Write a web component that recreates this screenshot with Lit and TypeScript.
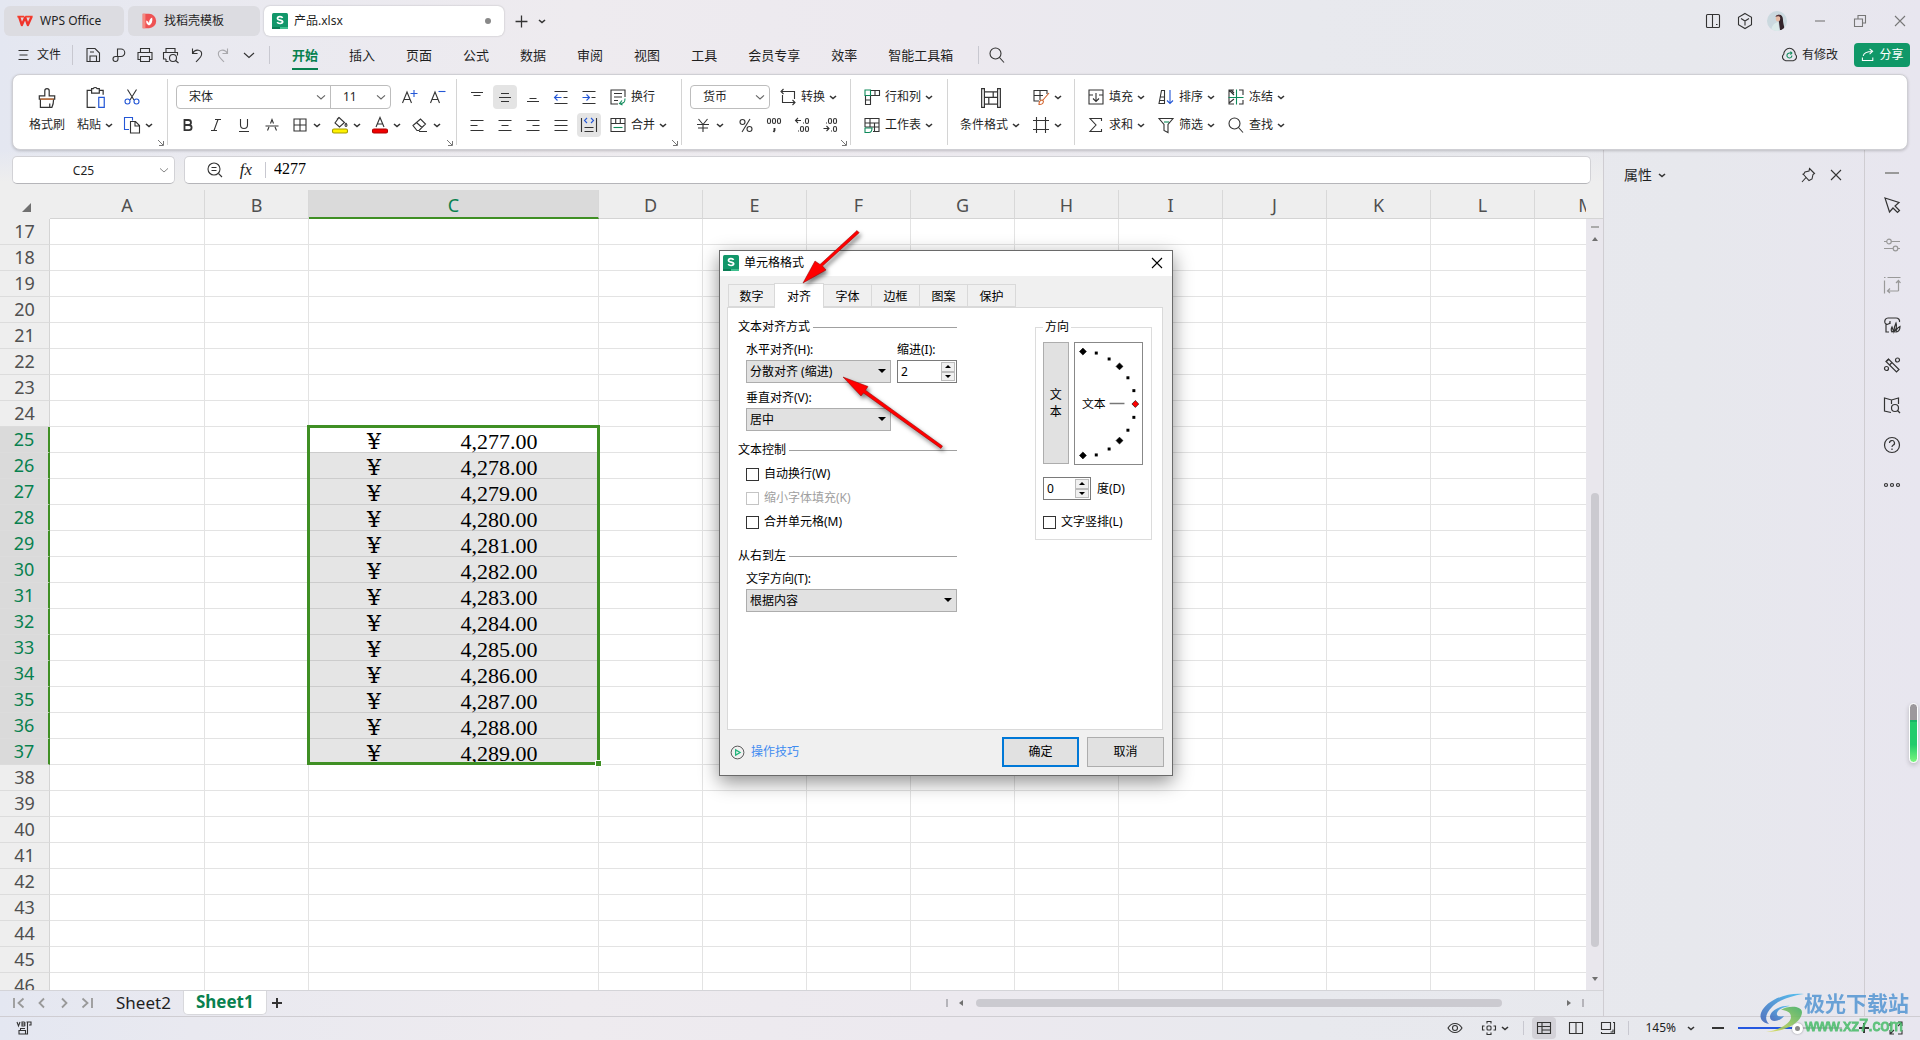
import { LitElement, html, svg, css, nothing, TemplateResult, SVGTemplateResult } from "lit";
import { customElement, property, state } from "lit/decorators.js";
import { classMap } from "lit/directives/class-map.js";

/* Every glyph is drawn on a 20 x 20 grid; stroke colour is inherited. */
const BLUE = "#2457d6";
const GREEN = "#0e8a5a";
const glyphs: Record<string, SVGTemplateResult> = {
  wps: svg`<path d="M1.500 5.200H9M10.500 5.200h8" stroke="#f5402c" stroke-width="2"/><path d="M3.500 5.500l3 9 3.700-8.500 3 8.500 4-9" stroke="#f0342c" stroke-width="2.600" stroke-linejoin="round"/>`,
  docer: svg`<path d="M3 2h7a8 8 0 0 1 0 16H3z" fill="#ee5253" stroke="none"/><path d="M3 2h3v16H3z" fill="#f58a80" stroke="none"/><path d="M10 15c-2.500-1-3.500-3-3-5.500 1.500.5 2.500 1.500 3 3 0-3 .8-5 3.500-6.500.8 4-.3 7.500-3.500 9z" fill="#fff" stroke="none"/>`,
  menu: svg`<path d="M4.500 5.500h10M5.500 10h8M4.500 14.500h10"/>`,
  save: svg`<path d="M4 3.500h8l4.500 4.500v8.500H4zM7 16.500v-5.500h6.500v5.500M7 7h4"/>`,
  output: svg`<path d="M8.500 11.500V4H12a3.700 3.700 0 0 1 0 7.500H6.500a2.500 2.500 0 1 0 2.500 2.500v-2.500"/>`,
  print: svg`<path d="M5.500 7.500v-4h9v4M5.500 14.500H3v-7h14v7h-2.500M5.500 11.500h9v5h-9z"/>`,
  preview: svg`<path d="M5 7.500v-4h9v4M5 14H2.500V7.500h14v3M5 14v2.500h2.500"/><circle cx="12" cy="13" r="3.500"/><path d="M14.500 15.500 17.500 18"/>`,
  undo: svg`<path d="M5.500 3.500v5h5M5.500 8.500c3-5.500 10-3.500 9 1.500-.4 2.500-3 4-5.500 7"/>`,
  redo: svg`<path d="M14.500 3.500v5h-5M14.500 8.500c-3-5.500-10-3.500-9 1.500.4 2.500 3 4 5.500 7"/>`,
  down: svg`<path d="M5 8l5 4.500L15 8"/>`,
  plus: svg`<path d="M10 3v14M3 10h14" stroke-width="1.500"/>`,
  plusBold: svg`<path d="M10 5v10M5 10h10" stroke-width="2"/>`,
  minusBold: svg`<path d="M4 10h12" stroke-width="2"/>`,
  search: svg`<circle cx="8.500" cy="8.500" r="5.500"/><path d="M12.500 12.500 17 17.500"/>`,
  layout: svg`<rect x="3.500" y="3.500" width="13" height="13" rx="1"/><path d="M9.500 3.500v13M13 13.500h1.500"/>`,
  cube: svg`<path d="M10 2.500l6.500 3.700v7.600L10 17.500l-6.500-3.700V6.200zM6 7.500l4 2.500 4-2.500M10 10v4.500"/>`,
  minimize: svg`<path d="M5 10h10" stroke="#777"/>`,
  restore: svg`<path d="M4.500 8h8v7.500h-8zM8 8V4.500h7.500V12h-3" stroke="#777"/>`,
  closeWin: svg`<path d="M5 5l10 10M15 5 5 15" stroke="#777"/>`,
  close: svg`<path d="M5 5l10 10M15 5 5 15"/>`,
  cloud: svg`<path d="M6 16h8a4 4 0 0 0 2-7 6 6 0 0 0-12 0 4 4 0 0 0 2 7z"/><path d="M12.500 10.500a2.600 2.600 0 1 1-2-2.500h1.500M11 6.500 12.500 8 11 9.500" stroke="${GREEN}"/>`,
  share: svg`<path d="M3 13v4h13v-4M4 11c.8-4 4-5.500 11.500-5.500M12 2.500l3.800 3L12 9"/>`,
  brush: svg`<path d="M8 8V3.500a2 2 0 0 1 4 0V8h5v3H3V8zM4 11v7.500h10.500c1-2 1.500-4 1.500-7.500M12.500 15v3.500"/><path d="M4 11h12" stroke="#e07b39"/>`,
  paste: svg`<path d="M5.500 3H2v15.500h7.500M13 3h3.500v4M6 1.500h1.500a2 2 0 0 1 3.500 0H13v4H6z"/><path d="M12.500 9.500h5v9h-5z" stroke="${BLUE}"/>`,
  cut: svg`<path d="M5.500 2.500 12 13M14.500 2.500 8 13"/><g stroke="${BLUE}"><circle cx="5.500" cy="14.500" r="2.500"/><circle cx="14.500" cy="14.500" r="2.500"/></g>`,
  copy: svg`<path d="M7 14.500H2.500v-12h8v3" stroke="${BLUE}"/><path d="M8.500 6.500h5l4 4V18h-9zM13 6.500V11h4.500"/>`,
  bold: svg`<path d="M6.500 5h4a2.400 2.400 0 0 1 0 5h-4zM6.500 10H11a2.600 2.600 0 0 1 0 5.200H6.500z" stroke-width="1.800"/>`,
  italic: svg`<path d="M9 4.500h6M5 15.500h6M12 4.500 8 15.500"/>`,
  underline: svg`<path d="M6.500 4v6a3.500 3.500 0 0 0 7 0V4M5 16.500h10"/>`,
  strike: svg`<path d="M5.500 15.500 7 12M8.500 8.500 10 4.500l1.500 4M13 12l1.500 3.500M3.500 11h13"/>`,
  borders: svg`<path d="M4 4h12v12H4zM10 4v12M4 10h12"/>`,
  fill: svg`<path d="M9 2.500l5.500 5-5 4.500L5 8zM7 4.500 9 2.500M16 8c1.500 2 1 3.500 0 3.500s-1.500-1.500 0-3.500"/><rect x="2.500" y="14" width="15" height="4" rx="1.500" fill="#fff200" stroke="#a59c00"/>`,
  fontcolor: svg`<path d="M6 12 10 2.500 14 12M7.500 9h5"/><rect x="2.500" y="14" width="15" height="4" rx="1.500" fill="#f00000" stroke="#b00000"/>`,
  eraser: svg`<path d="M3 10.500 10.500 4l5 5L9 15.500H7zM6.500 7.500l5.500 5M9 16.500h8"/>`,
  fontUp: svg`<path d="M3.500 16 8 5l4.500 11M5 12.500h6"/><path d="M15 3v7M11.500 6.500h7" stroke="${BLUE}"/>`,
  fontDown: svg`<path d="M3.500 16 8 5l4.500 11M5 12.500h6"/><path d="M11.500 4.500h7" stroke="${BLUE}"/>`,
  alignTop: svg`<path d="M4 5.500h12M6.500 8.500h7"/>`,
  alignMid: svg`<path d="M6 6.500h8M4 10.500h12M6 14.500h8"/>`,
  alignBottom: svg`<path d="M6.500 11.500h7M4 14.500h12"/>`,
  outdent: svg`<path d="M3.500 4.500h13M12.500 10.500h4M3.500 16.500h13"/><path d="M10.500 10.500H3.500M6.500 7.500l-3 3 3 3" stroke="${BLUE}"/>`,
  indent: svg`<path d="M3.500 4.500h13M12.500 10.500h4M3.500 16.500h13"/><path d="M3.500 10.500h7M7.500 7.500l3 3-3 3" stroke="${BLUE}"/>`,
  left: svg`<path d="M3.500 5.500h13M3.500 10.500h7M3.500 15.500h13"/>`,
  center: svg`<path d="M3.500 5.500h13M6.500 10.500h7M3.500 15.500h13"/>`,
  right: svg`<path d="M3.500 5.500h13M9.500 10.500h7M3.500 15.500h13"/>`,
  justify: svg`<path d="M3.500 5.500h13M3.500 10.500h13M3.500 15.500h13"/>`,
  distribute: svg`<path d="M2.500 3v14M17.500 3v14M5.500 12.500h9M5.500 16.500h9"/><path d="M8 3 5.500 5.500 8 8M12 3l2.500 2.500L12 8" stroke="${BLUE}"/>`,
  wrap: svg`<path d="M10 17H3V3h14v7M6 6.500h8M6 10h8M6 13.500h4"/><path d="M17 11.500c0 3-.5 5-4.500 5M14 13.500l-2.500 3 3 1.500" stroke="${GREEN}"/>`,
  merge: svg`<path d="M3 3.500h14v13H3zM3 8.500h14M7.700 3.500v5M12.300 3.500v5"/><path d="M5.500 12.500h9" stroke="${GREEN}"/>`,
  convert: svg`<path d="M4 4.500h12.500V12M4.500 8v7.500h12M5.500 2 3 4.500 5.500 7M14.500 13l2.500 2.500-2.500 2.500"/>`,
  yuan: svg`<path d="M5.500 4 10 9.500 14.500 4M10 9.500V17M4 9.500h12M5 13h10"/>`,
  percent: svg`<circle cx="6.500" cy="7" r="2.500"/><circle cx="13.500" cy="14" r="2.500"/><path d="M14 4 6 17"/>`,
  thousand: svg`<rect x="3.500" y="3.500" width="3" height="5" rx="1.500"/><rect x="8.500" y="3.500" width="3" height="5" rx="1.500"/><rect x="13.500" y="3.500" width="3" height="5" rx="1.500"/><path d="M10.500 13v2.500l-1 1.500" stroke-width="1.800"/>`,
  decMore: svg`<path d="M9 5.500H3.500M6 3 3.500 5.500 6 8M11 8h1M6 16h1"/><rect x="13.500" y="3.500" width="3" height="5" rx="1.500"/><rect x="8.500" y="11.500" width="3" height="5" rx="1.500"/><rect x="13.500" y="11.500" width="3" height="5" rx="1.500"/>`,
  decLess: svg`<path d="M3.500 13.500H9M6.500 11 9 13.500 6.500 16M11 16h1M6 8h1"/><rect x="8.500" y="3.500" width="3" height="5" rx="1.500"/><rect x="13.500" y="3.500" width="3" height="5" rx="1.500"/><rect x="13.500" y="11.500" width="3" height="5" rx="1.500"/>`,
  rowcol: svg`<path d="M8.500 3.500h9v5h-9M13 3.500v5M3.500 8.500v9h5v-9M3.500 13h5"/><path d="M3 3h5.500v5.500H3z" stroke="${GREEN}"/>`,
  sheet: svg`<path d="M11 16.500h6V3.500H3V12M3 8h14M8 3.500V12M3 12h14M12.500 8v8.500"/><path d="M3 13h7c0 2.500-1 4.500-3 4.500H3z" stroke="${GREEN}" fill="#fff"/>`,
  condition: svg`<path d="M4 1.500H1.500v17H4M16 1.500h2.500v17H16M4 1v18M16 1v18M4 4.500h12M4 9.500h12M4 15.500h12M12 4.500v5M8 9.500v6"/>`,
  tablestyle: svg`<path d="M8 14H3V3.500h13V7M3 8.500h9M9 3.500V13"/><path d="M18 6l-6 7M8 17.500c0-3 1-4.500 3.500-4.500 2 1.500.5 5-3.500 4.500z" stroke="#d2622a"/>`,
  cells: svg`<path d="M5.500 2v16M14.500 2v16M2 5.500h16M2 14.500h16"/>`,
  fillDown: svg`<path d="M3 8V3h14v5M3 8h4M13 8h4M3 8v9h14V8M10 6v8M7 11.500 10 14.500l3-3"/>`,
  sort: svg`<path d="M3 16.500 5.500 3.500H8.500v13zM4.500 10h4M3.500 13.500h5"/><path d="M14 3v13.500M11 13.500l3 3 3-3" stroke="${BLUE}"/>`,
  freeze: svg`<path d="M8 3H3v14h5M13 17h4v-4M17 8V3h-4M3 3l5 5M5 3l3 3M8 12l-5 4"/><path d="M10.500 2.500v15M2.500 10.500h15" stroke="${GREEN}"/>`,
  sum: svg`<path d="M15.500 6V3.500H4l6 6.500-6 6.500h11.500V14"/>`,
  filter: svg`<path d="M3 3.500h14l-5 6v8l-4-2v-6z"/><path d="M8 7h5" stroke="${GREEN}"/>`,
  zoomFx: svg`<circle cx="9" cy="9" r="6"/><path d="M13.500 13.500 17 17M6.500 7.500h5M6.500 10.500h5"/>`,
  pin: svg`<path d="M11.500 3.500l5 5-1.500 1-1 4.500-3 1.500L5.500 9.500 7 7l4-1zM8 12.500 4 17M5.500 9.500 4.500 9"/>`,
  dash: svg`<path d="M3 10h14" stroke="#999" stroke-width="2"/>`,
  pointer: svg`<path d="M3 3l14 4.500-4 3.500 4.500 4.500-2 2L11 13l-3.500 4z"/>`,
  sliders: svg`<g stroke="#999"><path d="M2 6.500h3M9 6.500h9M2 13.500h9M15.500 13.500H18"/><circle cx="7" cy="6.500" r="2.300"/><circle cx="13.500" cy="13.500" r="2.300"/></g>`,
  resize: svg`<g stroke="#999"><path d="M5.500 2.500h13M2.500 5.500v13M2 2.500h1.500M16.500 16V6M14 8l2.500-2.500L18.500 8M16.500 16H6M8 13.500 5.500 16 8 18"/></g>`,
  artist: svg`<path d="M4 9v8h3M3 8c-1-3 1-5 3-5h8c2.500 0 4 2 3.500 4M8 9V6M3 8c1.500 2 4 1.500 5-.5M10 17c-1.500-2-.5-4 0-5l1.500 4zM12 16c0-4 1-6 2-8 1 3 .5 6-2 9zM14 17c0-3 2-4.500 4-5.500 0 3-1 5-4 5.500z"/>`,
  tools: svg`<path d="M4 6.500 6.500 4l10.500 10.500-2.500 2.500zM8 9.500l2-2"/><circle cx="15.500" cy="5" r="2"/><circle cx="4.500" cy="13.500" r="2"/><path d="M7 4 5 6"/>`,
  book: svg`<path d="M9 17.500 2.500 16V3l7 2 7-2v6M9.500 5v4"/><circle cx="13" cy="13" r="3.500"/><path d="M15.500 15.500 18 18"/>`,
  help: svg`<circle cx="10" cy="10" r="7.500"/><path d="M7.500 8a2.500 2.500 0 1 1 3.500 2.300c-.8.400-1 .9-1 1.700M10 13.500V15"/>`,
  more: svg`<circle cx="4" cy="10" r="1.500"/><circle cx="10" cy="10" r="1.500"/><circle cx="16" cy="10" r="1.500"/>`,
  first: svg`<path d="M4 5v10M13.500 5.500 8.500 10l5 4.500"/>`,
  prev: svg`<path d="M12 5.500 7.500 10l4.500 4.500"/>`,
  next: svg`<path d="M8 5.500 12.500 10 8 14.500"/>`,
  last: svg`<path d="M16 5v10M6.500 5.500l5 4.500-5 4.500"/>`,
  macro: svg`<path d="M3 4l1.500 4L6 4M8 4h2a1 1 0 0 1 0 2H8zM8 6h2a1 1 0 0 1 0 2H8zM12.500 4h4.500v3h-2M13.500 4v12H5v-3.500h6.500V16M6.500 12.500v-2H11"/>`,
  eye: svg`<path d="M3 10c3.500-6 10.500-6 14 0-3.500 6-10.500 6-14 0z"/><circle cx="10" cy="10" r="2.500"/>`,
  cross: svg`<rect x="8" y="8" width="4" height="4" rx="1"/><path d="M8 5.500v-2h4v2M8 14.500v2h4v-2M5.500 8h-2v4h2M14.500 8h2v4h-2"/>`,
  viewNormal: svg`<path d="M3.500 4.500h13v11h-13zM3.500 8.500h13M8 4.500v11M8 12h8.500"/>`,
  viewBook: svg`<path d="M3.500 4.500h13v11h-13zM10 4.500v11"/>`,
  viewPage: svg`<path d="M3.500 4.500h9v7h-9zM15 4.500h1.500v11h-13V14M12.500 14H15v-2.500"/>`,
  full: svg`<path d="M4 8V5M4 12v4h4M12 16h4v-4M16 8V4h-4M16 4l-4 4M4 16l4-4"/>`,
  tips: svg`<circle cx="10" cy="10" r="8.500"/><path d="M7.500 6.500 13.500 10l-6 3.500z" stroke="#1fb47a" stroke-width="1.600"/>`,
};

const icon = (name: string, cls = ""): TemplateResult => html`<svg
  class="icon ${cls}" viewBox="0 0 20 20" width="20" height="20" aria-hidden="true">${glyphs[name]}</svg>`;

const chevron = html`<svg class="chev" viewBox="0 0 10 10" width="10" height="10" aria-hidden="true">
  <path d="M2 4l3 2.500L8 4"/></svg>`;

const sLogo = html`<svg class="slogo" viewBox="0 0 16 16" width="16" height="16" aria-hidden="true">
  <rect width="16" height="16" rx="1.500" fill="#12976a"/><path d="M8 14h8v2H8z" fill="#3fc08f"/><path d="M0 14h8v2H0z" fill="#0b7d55"/>
  <path d="M10.500 5c-.6-1.800-5-1.800-5 .4 0 2.300 5.200 1.100 5.200 3.400 0 2.200-4.800 2.200-5.400.2" fill="none" stroke="#fff" stroke-width="1.700"/></svg>`;

const shared = css`
  :host { box-sizing: border-box; }
  *, *::before, *::after { box-sizing: border-box; }
  button, select, input {
    font: inherit; color: inherit; background: none; border: 0; margin: 0; padding: 0;
  }
  button { display: inline-flex; align-items: center; justify-content: center; }
  .icon, .chev { display: block; flex: none; fill: none; stroke: #333; stroke-width: 1.1; }
  .chev { stroke: #333; stroke-width: 1.6; }
  .slogo { display: block; flex: none; }
`;

/* ---------- Ribbon ---------- */
@customElement("wps-ribbon")
class WpsRibbon extends LitElement {
  static styles = [shared, css`
    :host {
      display: flex; height: 76px; margin: 0 12px; background: #fff; border-radius: 8px;
      border: 1px solid #cfcfd4; box-shadow: 0 1px 3px #00000030; font-size: 12px; line-height: 16px;
      position: relative; z-index: 1;
    }
    .group { display: flex; position: relative; padding-right: 6px; }
    .group::after { content: ""; position: absolute; right: 0; top: 4px; bottom: 4px; width: 1px; background: #d4d4d4; }
    .group.last::after { display: none; }
    .corner { position: absolute; right: 3px; bottom: 2px; fill: none; stroke: #777; }
    .rows { display: flex; flex-direction: column; gap: 4px; padding-top: 10px; }
    .row { display: flex; align-items: center; height: 24px; gap: 8px; }
    .tight { gap: 4px; }
    .tool { height: 24px; gap: 3px; white-space: nowrap; }
    .split { gap: 2px; }
    .sq { width: 24px; border-radius: 4px; }
    .on { background: #e4e4e4; }
    .big { flex-direction: column; height: 56px; margin-top: 7px; gap: 4px; }
    .big .cap { display: flex; align-items: center; gap: 3px; height: 20px; }
    .big .icon { width: 22px; height: 26px; }
    .g1 { width: 155px; padding-left: 16px; }
    .g1 .paste { margin-left: 12px; margin-right: 8px; }
    .g2 { width: 289px; padding-left: 8px; }
    .g3 { width: 225px; padding-left: 8px; }
    .g3 .wide { margin-left: 3px; }
    .g4 { width: 169px; padding-left: 8px; }
    .g4 .pad { padding-left: 3px; }
    .g4 .yuan { margin-right: 3px; }
    .g5 { width: 97px; padding-left: 11px; }
    .g6 { width: 127px; padding-left: 12px; gap: 10px; }
    .g7 { padding-left: 11px; }
    .g7 .row { gap: 10px; }
    .fontline { padding-left: 2px; }
    .boxes { display: flex; border: 1px solid #bdbdbd; border-radius: 4px; height: 24px; }
    .pick { position: relative; display: flex; align-items: center; }
    .pick select { appearance: none; width: 100%; height: 22px; padding: 0 24px 0 12px; }
    .pick .icon { position: absolute; right: 1px; width: 16px; height: 16px; pointer-events: none; stroke: #666; stroke-width: 1.4; }
    .face { width: 153px; }
    .size { width: 60px; border-left: 1px solid #bdbdbd; }
    .kind { width: 78px; }
  `];

  private tool(name: string, label: string, text = "", drop = false, cls = "") {
    return html`<button class="tool ${text ? "" : "split"} ${cls}" aria-label=${label} title=${label}>
      ${icon(name)}${text ? html`<span>${text}</span>` : nothing}${drop ? chevron : nothing}</button>`;
  }
  private corner = html`<svg class="corner" viewBox="0 0 8 8" width="8" height="8" aria-hidden="true"><path d="M1 1l5 5M6.500 2v4.500H2"/></svg>`;
  private list(cls: string, label: string, options: string[]) {
    return html`<span class="pick ${cls}"><select aria-label=${label}>${options.map((o) => html`<option>${o}</option>`)}</select>${icon("down")}</span>`;
  }

  render() {
    return html`
      <div class="group g1">
        <button class="big">${icon("brush")}<span class="cap">格式刷</span></button>
        <button class="big paste">${icon("paste")}<span class="cap">粘贴${chevron}</span></button>
        <div class="rows">
          <div class="row">${this.tool("cut", "剪切")}</div>
          <div class="row">${this.tool("copy", "复制", "", true)}</div>
        </div>${this.corner}
      </div>
      <div class="group g2">
        <div class="rows">
          <div class="row">
            <div class="boxes">${this.list("face", "字体", ["宋体"])}${this.list("size", "字号", ["11"])}</div>
            ${this.tool("fontUp", "增大字号")}${this.tool("fontDown", "减小字号")}
          </div>
          <div class="row fontline">
            ${this.tool("bold", "加粗")}${this.tool("italic", "倾斜")}${this.tool("underline", "下划线")}${this.tool("strike", "删除线")}
            ${this.tool("borders", "边框", "", true)}${this.tool("fill", "填充颜色", "", true)}
            ${this.tool("fontcolor", "字体颜色", "", true)}${this.tool("eraser", "清除", "", true)}
          </div>
        </div>${this.corner}
      </div>
      <div class="group g3">
        <div class="rows">
          <div class="row tight">
            ${this.tool("alignTop", "顶端对齐", "", false, "sq")}${this.tool("alignMid", "垂直居中", "", false, "sq on")}
            ${this.tool("alignBottom", "底端对齐", "", false, "sq")}${this.tool("outdent", "减少缩进", "", false, "sq")}
            ${this.tool("indent", "增加缩进", "", false, "sq")}${this.tool("wrap", "换行", "换行", false, "wide")}
          </div>
          <div class="row tight">
            ${this.tool("left", "左对齐", "", false, "sq")}${this.tool("center", "居中", "", false, "sq")}
            ${this.tool("right", "右对齐", "", false, "sq")}${this.tool("justify", "两端对齐", "", false, "sq")}
            ${this.tool("distribute", "分散对齐", "", false, "sq on")}${this.tool("merge", "合并", "合并", true, "wide")}
          </div>
        </div>${this.corner}
      </div>
      <div class="group g4">
        <div class="rows">
          <div class="row"><div class="boxes">${this.list("kind", "数字格式", ["货币"])}</div>${this.tool("convert", "转换", "转换", true)}</div>
          <div class="row pad">
            ${this.tool("yuan", "会计格式", "", true, "yuan")}${this.tool("percent", "百分比")}${this.tool("thousand", "千位分隔")}
            ${this.tool("decMore", "增加小数位")}${this.tool("decLess", "减少小数位")}
          </div>
        </div>${this.corner}
      </div>
      <div class="group g5">
        <div class="rows">
          <div class="row">${this.tool("rowcol", "行和列", "行和列", true)}</div>
          <div class="row">${this.tool("sheet", "工作表", "工作表", true)}</div>
        </div>
      </div>
      <div class="group g6">
        <button class="big">${icon("condition")}<span class="cap">条件格式${chevron}</span></button>
        <div class="rows">
          <div class="row">${this.tool("tablestyle", "表格样式", "", true)}</div>
          <div class="row">${this.tool("cells", "单元格样式", "", true)}</div>
        </div>
      </div>
      <div class="group g7 last">
        <div class="rows">
          <div class="row">${this.tool("fillDown", "填充", "填充", true)}${this.tool("sort", "排序", "排序", true)}${this.tool("freeze", "冻结", "冻结", true)}</div>
          <div class="row">${this.tool("sum", "求和", "求和", true)}${this.tool("filter", "筛选", "筛选", true)}${this.tool("search", "查找", "查找", true)}</div>
        </div>
      </div>`;
  }
}

/* ---------- Cell grid ---------- */
@customElement("wps-grid")
class WpsGrid extends LitElement {
  @property({ type: Number }) firstRow = 17;
  @property({ type: Number }) lastRow = 46;
  private columns = "ABCDEFGHIJKLM".split("");
  private values = new Map(Array.from({ length: 13 }, (_, i) => [25 + i, `4,${277 + i}.00`] as [number, string]));

  static styles = [shared, css`
    :host { display: block; overflow: hidden; flex: 1; min-width: 0; background: #fff; }
    table { border-collapse: separate; border-spacing: 0; table-layout: fixed; width: 1639px; }
    .wHead { width: 50px; } .wA { width: 155px; } .wC { width: 290px; } .wX { width: 104px; }
    th { font-weight: 400; font-size: 18px; line-height: 22px; color: #505050; background: #eeeeee; padding: 0; }
    thead th { height: 29px; padding-top: 2px; border-right: 1px solid #d8d8d8; border-bottom: 1px solid #d4d4d4; }
    thead .all { border-right-color: transparent; border-bottom-color: transparent; text-align: right; padding-right: 18px; }
    .all svg { display: inline-block; fill: #707070; }
    thead .sel { background: #dadada; color: #08814f; border-bottom: 2px solid #3f8f24; }
    tbody th { height: 26px; padding-bottom: 2px; border-right: 1px solid #d4d4d4; border-bottom: 1px solid #dcdcdc; }
    tbody th.sel { background: #dadada; color: #08814f; border-right: 2px solid #3f8f24; }
    td { height: 26px; padding: 0; border-right: 1px solid #e3e3e3; border-bottom: 1px solid #e3e3e3; }
    .val { background: #e5e5e5; border-bottom-color: #cccccc; position: relative; }
    .val.active { background: #fff; }
    .money {
      display: grid; grid-template-columns: 1fr 88px; padding: 2px 55px 0 58px; height: 25px; line-height: 25px;
      font-family: "Liberation Serif", serif; font-size: 22px; color: #000; text-align: center;
    }
    .sign { font-family: "DejaVu Serif", serif; font-size: 22px; text-align: left; }
    .frame {
      position: absolute; left: -2px; right: -2px; top: -2px; height: calc(100% * 13 + 15px);
      border: 3px solid #3f8f24; pointer-events: none; z-index: 1;
    }
    .frame::after {
      content: ""; position: absolute; right: -5px; bottom: -5px; width: 7px; height: 7px;
      background: #3f8f24; border: 1px solid #fff;
    }
  `];

  render() {
    const rows = Array.from({ length: this.lastRow - this.firstRow + 1 }, (_, i) => this.firstRow + i);
    return html`<table>
      <colgroup><col class="wHead" />${this.columns.map((c) => html`<col class=${c === "A" ? "wA" : c === "C" ? "wC" : "wX"} />`)}</colgroup>
      <thead><tr>
        <th class="all" aria-label="全选"><svg viewBox="0 0 9 9" width="9" height="9"><path d="M9 0v9H0z"/></svg></th>
        ${this.columns.map((c) => html`<th class=${classMap({ sel: c === "C" })}>${c}</th>`)}
      </tr></thead>
      <tbody>${rows.map((r) => html`<tr>
        <th class=${classMap({ sel: this.values.has(r) })}>${r}</th>
        ${this.columns.map((c) => {
          const v = c === "C" ? this.values.get(r) : undefined;
          return v
            ? html`<td class="val ${r === 25 ? "active" : ""}"><div class="money"><span class="sign">¥</span><span>${v}</span></div>${r === 25 ? html`<div class="frame"></div>` : nothing}</td>`
            : html`<td></td>`;
        })}
      </tr>`)}</tbody>
    </table>`;
  }
}

/* ---------- Cell format dialog ---------- */
@customElement("wps-format-dialog")
class WpsFormatDialog extends LitElement {
  @state() private tab = "对齐";
  static styles = [shared, css`
    :host {
      display: flex; flex-direction: column; width: 454px; background: #f0f0f0; border: 1px solid #6a6a6a;
      box-shadow: 0 6px 18px #00000070; font-size: 12px; line-height: 16px; color: #000;
    }
    .head { display: flex; align-items: center; gap: 5px; height: 25px; padding: 0 5px 2px 3px; background: #fff; }
    .head h2 { flex: 1; margin: 0; font-size: 12px; font-weight: 400; }
    .head .icon { stroke: #000; }
    .tabs { display: flex; align-items: flex-end; height: 31px; padding: 0 8px; }
    .tab { width: 48px; height: 23px; padding-top: 2px; border: 1px solid #d9d9d9; border-left: 0; }
    .tab:first-child { border-left: 1px solid #d9d9d9; width: 46px; border-right: 0; }
    .tab.cur { width: 50px; height: 25px; background: #fff; border-left: 1px solid #d9d9d9; border-bottom: 0; margin-bottom: -1px; z-index: 1; }
    .panel { display: flex; align-items: flex-start; justify-content: space-between; height: 423px; margin: 0 9px 0 7px; padding: 11px 10px; background: #fff; border: 1px solid #d9d9d9; }
    .left { display: flex; flex-direction: column; width: 219px; }
    .caption { display: flex; align-items: center; gap: 3px; margin: 0; font-size: 12px; font-weight: 400; }
    .caption::after { content: ""; flex: 1; height: 1px; background: #a0a0a0; }
    .block { display: flex; flex-direction: column; padding: 7px 0 0 8px; gap: 7px; }
    .checks { padding-top: 8px; gap: 8px; }
    .gapS { margin-top: 11px; } .gapL { margin-top: 18px; }
    .pair { display: flex; gap: 6px; }
    .field { display: flex; flex-direction: column; gap: 2px; }
    .combo { position: relative; display: flex; align-self: flex-start; }
    .combo select { appearance: none; width: 145px; height: 23px; padding: 0 20px 0 3px; background: #e1e1e1; border: 1px solid #adadad; }
    .combo.wide select { width: 211px; }
    .combo svg { position: absolute; right: 5px; top: 9px; pointer-events: none; }
    .spin { display: flex; width: 60px; height: 23px; padding: 1px; border: 1px solid #7a7a7a; background: #fff; }
    .spin.small { width: 48px; }
    .spin input { flex: 1; min-width: 0; padding-left: 2px; outline: 0; }
    .steps { display: flex; flex-direction: column; width: 14px; }
    .steps button { flex: 1; background: #f0f0f0; border: 1px solid #bcbcbc; }
    .check { display: flex; align-items: center; gap: 5px; height: 16px; }
    .check input { appearance: none; width: 13px; height: 13px; border: 1px solid #333; background: #fff; }
    .off { color: #a0a0a0; } .off input { border-color: #c4c4c4; }
    fieldset { margin: 0; width: 117px; padding: 7px 8px 9px 7px; border: 1px solid #dcdcdc; min-width: 0; }
    legend { padding: 0 2px; }
    .dialrow { display: flex; align-items: flex-start; gap: 5px; }
    .vert { flex-direction: column; width: 26px; height: 122px; background: #e1e1e1; border: 1px solid #adadad; }
    .vert { line-height: 17px; }
    .dial { display: block; border: 1px solid #888; background: #fff; }
    .dial text { font-size: 12px; fill: #000; }
    .deg { display: flex; align-items: center; gap: 6px; margin: 12px 0 14px; }
    .foot { display: flex; align-items: center; gap: 8px; padding: 7px 8px 8px 10px; }
    .tips { display: flex; align-items: center; gap: 6px; flex: 1; color: #3f8cf0; text-decoration: none; }
    .tips .icon { width: 15px; height: 15px; stroke: #555; stroke-width: 1.3; }
    .act { width: 77px; height: 30px; background: #e1e1e1; border: 1px solid #adadad; }
    .act.ok { border: 2px solid #0078d7; }
  `];

  private caret = html`<svg viewBox="0 0 8 4" width="8" height="4" aria-hidden="true"><path d="M0 0h8L4 4z" fill="#000"/></svg>`;
  private spin(id: string, value: string, small = false) {
    return html`<span class="spin ${small ? "small" : ""}"><input id=${id} type="text" inputmode="numeric" .value=${value} />
      <span class="steps">
        <button aria-label="增加"><svg viewBox="0 0 6 3" width="6" height="3"><path d="M0 3h6L3 0z"/></svg></button>
        <button aria-label="减少"><svg viewBox="0 0 6 3" width="6" height="3"><path d="M0 0h6L3 3z"/></svg></button>
      </span></span>`;
  }
  private combo(id: string, label: string, value: string, wide = false) {
    return html`<div class="field"><label for=${id}>${label}</label>
      <span class="combo ${wide ? "wide" : ""}"><select id=${id}><option>${value}</option></select>${this.caret}</span></div>`;
  }
  private check(label: string, disabled = false) {
    return html`<label class="check ${disabled ? "off" : ""}"><input type="checkbox" ?disabled=${disabled} />${label}</label>`;
  }
  private dots() {
    const big = [[8, 8], [45, 23], [61, 61], [45, 98], [8, 113]];
    const small = [[21, 9], [34, 15], [53, 34], [59, 47], [59, 74], [53, 87], [34, 106], [21, 112]];
    return svg`${big.map(([x, y], i) => svg`<path d="M${x} ${y - 3.5}l3.500 3.500-3.500 3.500-3.500-3.500z" fill=${i === 2 ? "#f00" : "#000"} stroke="#000" stroke-width=".6"/>`)}
      ${small.map(([x, y]) => svg`<rect x=${x - 1} y=${y - 1} width="3" height="3"/>`)}`;
  }

  render() {
    return html`
      <div class="head">${sLogo}<h2>单元格格式</h2><button aria-label="关闭">${icon("close")}</button></div>
      <div class="tabs" role="tablist">${["数字", "对齐", "字体", "边框", "图案", "保护"].map((t) => html`
        <button role="tab" class=${classMap({ tab: true, cur: t === this.tab })} @click=${() => (this.tab = t)}>${t}</button>`)}</div>
      <div class="panel">
        <div class="left">
          <h3 class="caption">文本对齐方式</h3>
          <div class="block">
            <div class="pair">
              ${this.combo("h", "水平对齐(H):", "分散对齐 (缩进)")}
              <div class="field"><label for="ind">缩进(I):</label>${this.spin("ind", "2")}</div>
            </div>
            ${this.combo("v", "垂直对齐(V):", "居中")}
          </div>
          <h3 class="caption gapS">文本控制</h3>
          <div class="block checks">${this.check("自动换行(W)")}${this.check("缩小字体填充(K)", true)}${this.check("合并单元格(M)")}</div>
          <h3 class="caption gapL">从右到左</h3>
          <div class="block">${this.combo("dir", "文字方向(T):", "根据内容", true)}</div>
        </div>
        <fieldset>
          <legend>方向</legend>
          <div class="dialrow">
            <button class="vert"><span>文</span><span>本</span></button>
            <svg class="dial" viewBox="0 0 68 121" width="70" height="123">${this.dots()}
              <text x="7" y="65">文本</text><path d="M35 60.500h15" stroke="#777" stroke-width="1.500"/></svg>
          </div>
          <div class="deg">${this.spin("deg", "0", true)}<label for="deg">度(D)</label></div>
          ${this.check("文字竖排(L)")}
        </fieldset>
      </div>
      <div class="foot">
        <a class="tips" href="#tips">${icon("tips")}操作技巧</a>
        <button class="act ok">确定</button><button class="act">取消</button>
      </div>`;
  }
}

/* ---------- Application shell ---------- */
@customElement("app-root")
class AppRoot extends LitElement {
  static styles = [shared, css`
    :host {
      display: flex; flex-direction: column; height: 100vh; overflow: hidden; position: relative;
      font-family: "Noto Sans", "Noto Sans CJK SC", sans-serif; font-size: 12px; line-height: 16px; color: #1f1f1f;
      background: linear-gradient(90deg, #e4e7f1 0, #e9e9f0 10%, #eeebef 30%, #ece9ef 50%, #e8e9ee 68%, #e7e8ed 88%, #e8e6ef 100%);
    }
    .title { display: flex; align-items: center; gap: 4px; height: 38px; padding: 4px 10px 0 4px; }
    .doc { height: 30px; gap: 6px; padding: 0 12px; border-radius: 6px; background: #dcdce1; justify-content: flex-start; }
    .doc .icon { width: 18px; height: 18px; }
    .home { width: 120px; } .tmpl { width: 132px; }
    .doc.cur { width: 240px; padding: 0 13px 0 8px; background: #fff; box-shadow: 0 0 2px #00000040; }
    .doc .name { flex: 1; text-align: left; }
    .dot { width: 6px; height: 6px; border-radius: 50%; background: #888; }
    .add { gap: 7px; margin-left: 5px; }
    .add .icon { width: 17px; height: 17px; }
    .right { display: flex; align-items: center; margin-left: auto; }
    .win { gap: 12px; }
    .win .end { gap: 20px; margin-left: 11px; display: flex; }
    .win .icon { width: 20px; }
    .menu { display: flex; align-items: center; height: 36px; padding: 0 10px 2px 14px; }
    .file { gap: 3px; }
    .rule { width: 1px; height: 18px; background: #c8c8d0; }
    .quick { display: flex; gap: 6px; padding: 0 10px; }
    .quick { margin-left: 11px; border-left: 1px solid #c8c8d0; }
    .faded { opacity: .35; }
    .nav { display: flex; gap: 31px; margin: 0 25px 0 22px; font-size: 13px; line-height: 20px; }
    .nav button { height: 29px; border-bottom: 2px solid transparent; padding-top: 2px; }
    .nav .cur { color: #08814f; font-weight: 700; border-bottom-color: #08814f; }
    .find { margin-left: 8px; }
    .dirty { gap: 3px; margin-right: 16px; }
    .dirty .icon { width: 19px; }
    .share { height: 24px; width: 56px; gap: 3px; border-radius: 4px; background: #109868; color: #fff; }
    .share .icon { stroke: #fff; width: 16px; height: 18px; stroke-width: 1.3; }
    .main { display: flex; flex: 1; min-height: 0; }
    .book { display: flex; flex-direction: column; flex: 1; min-width: 0; border-right: 1px solid #cfcdd2; }
    .formula { display: flex; gap: 9px; padding: 6px 12px 6px; background: linear-gradient(#eeeeee00, #eeeeee 80%); }
    .cellname { position: relative; display: flex; align-items: center; width: 163px; }
    .cellname input { width: 100%; height: 26px; text-align: center; padding-right: 20px; }
    .cellname button { position: absolute; right: 2px; }
    .cellname .icon { width: 16px; height: 16px; stroke: #777; }
    .cellname, .entry { height: 28px; background: #fff; border: 1px solid #d2d2d6; border-bottom-color: #b5b5b9; border-radius: 5px; }
    .entry { display: flex; align-items: center; flex: 1; padding-left: 20px; }
    .fx { width: 20px; margin: 0 9px 0 11px; font: italic 17px "Liberation Serif", serif; }
    .entry .rule { height: 16px; }
    .entry input { flex: 1; min-width: 0; padding: 0 0 2px 8px; font: 16px "Liberation Serif", serif; color: #000; outline: 0; }
    .gridrow { display: flex; flex: 1; min-height: 0; }
    .vbar { display: flex; flex-direction: column; align-items: center; width: 17px; background: #e9e7ed; }
    .vtop { height: 29px; width: 100%; background: #eee; border-bottom: 1px solid #d4d4d4; }
    .split { width: 8px; height: 2px; margin: 7px 0 8px; background: #aaa; }
    .track { display: flex; flex-direction: column; flex: 1; width: 8px; padding: 251px 0 29px; }
    .thumb { flex: 1; border-radius: 4px; background: #cbcad0; }
    .arrow { display: block; fill: #707070; flex: none; }
    .vbar .low { margin-bottom: 8px; }
    .sheets { display: flex; align-items: center; height: 26px; padding: 0 19px 2px 10px; border-top: 1px solid #d4d4d8; }
    .steps { display: flex; gap: 2px; margin-right: 8px; }
    .steps .icon { stroke: #999; stroke-width: 1.8; }
    .sheet { height: 23px; font-size: 17px; padding: 0 12px; }
    .sheet.cur { height: 24px; background: #fff; color: #08814f; font-weight: 700; border-radius: 0 0 5px 5px; border: 1px solid #d8d8dc; border-top: 0; }
    .hbar { display: flex; align-items: center; margin-left: auto; width: 638px; gap: 10px; }
    .hbar .tick { width: 2px; height: 8px; background: #b5b4ba; }
    .hbar .ht { display: flex; flex: 1; padding: 0 54px 0 2px; }
    .hbar .ht span { flex: 1; height: 8px; border-radius: 4px; background: #cbcad0; }
    .props { width: 260px; padding: 15px 18px 0 20px; display: flex; align-items: flex-start; }
    .props h2 { display: flex; align-items: center; gap: 5px; flex: 1; margin: 0; font-size: 14px; line-height: 20px; font-weight: 400; }
    .props .acts { display: flex; gap: 8px; }
    .strip { display: flex; flex-direction: column; align-items: center; gap: 20px; width: 56px; padding: 13px 2px 0 0; border-left: 1px solid #cfcdd2; }
    .strip button:first-child { margin-bottom: -8px; }
    .strip .icon { stroke-width: 1.2; }
    .status { display: flex; align-items: center; height: 24px; padding: 0 14px 1px; border-top: 1px solid #cfcdd2; }
    .status .rule { height: 14px; }
    .status .right { height: 22px; }
    .status .right > * { flex: none; }
    .eye { margin-right: 14px; }
    .cross { gap: 1px; margin-right: 13px; }
    .views { display: flex; gap: 8px; margin: 0 8px; }
    .views button { width: 24px; height: 22px; border-radius: 4px; }
    .views .cur { background: #d3d2d8; }
    .zoomv { gap: 10px; margin: 0 12px 0 16px; }
    .slider { appearance: none; width: 104px; height: 14px; margin: 0 12px 0 10px; background: linear-gradient(90deg, #2457e0 0 58%, #b8b8be 58%) center / 100% 2px no-repeat; }
    .slider::-webkit-slider-thumb { appearance: none; width: 11px; height: 11px; border-radius: 50%; background: #888; border: 3px solid #fff; box-shadow: 0 0 2px #0006; }
    .fullbtn { margin-left: 12px; }
    .dialog { position: absolute; left: 719px; top: 250px; z-index: 2; }
    .pointers { position: absolute; left: 790px; top: 220px; z-index: 3; pointer-events: none; filter: drop-shadow(2px 3px 2px #00000080); }
    .edge { position: absolute; right: 2px; top: 703px; width: 9px; height: 60px; border: 1px solid #fff; border-radius: 5px; z-index: 3;
      background: linear-gradient(#9c989c 0 28%, #19b467 28% 31%, #22cc6c 31% 70%, #7bf57f); box-shadow: 0 2px 5px #0003; }
    .mark { position: absolute; right: 11px; bottom: 4px; z-index: 3; display: flex; align-items: center; opacity: .88; pointer-events: none; }
    .mark b { display: block; font-size: 21px; line-height: 26px; color: #5898d3; font-weight: 700; }
    .mark small { display: block; font: 16px/20px "Liberation Sans", sans-serif; color: #4cbc6c; -webkit-text-stroke: 1px #4cbc6c; padding-left: 1px; }
  `];

  private tri = (d: string, cls = "") => html`<svg class="arrow ${cls}" viewBox="0 0 6 6" width="6" height="6" aria-hidden="true"><path d=${d}/></svg>`;
  private btn = (name: string, label: string, cls = "") => html`<button class=${cls} aria-label=${label} title=${label}>${icon(name)}</button>`;

  render() {
    return html`
      <header class="title">
        <button class="doc home">${icon("wps")}WPS Office</button>
        <button class="doc tmpl">${icon("docer")}找稻壳模板</button>
        <button class="doc cur">${sLogo}<span class="name">产品.xlsx</span><span class="dot"></span></button>
        <button class="add" aria-label="新建">${icon("plus")}${chevron}</button>
        <div class="right win">
          ${this.btn("layout", "布局")}${this.btn("cube", "应用")}
          <button aria-label="账户"><svg viewBox="0 0 20 24" width="20" height="24"><clipPath id="a"><circle cx="10" cy="12" r="10"/></clipPath>
            <g clip-path="url(#a)"><path d="M0 0h20v24H0z" fill="#cbd9df"/><path d="M11 6c3-1 5 1 5 5 0 4 2 7 1 10h-4z" fill="#33242b"/><ellipse cx="11" cy="9.500" rx="2.200" ry="3" fill="#e6bba5"/><path d="M8.500 8c.5-3 5-3 5 0-1.500-1-3.500-1-5 0z" fill="#56353a"/><path d="M4 24c0-7 3-10 7-11l2 11z" fill="#dcebea"/></g></svg></button>
          <span class="end">${this.btn("minimize", "最小化")}${this.btn("restore", "还原")}${this.btn("closeWin", "关闭窗口")}</span>
        </div>
      </header>
      <div class="menu">
        <button class="file">${icon("menu")}文件</button>
        <div class="quick">
          ${this.btn("save", "保存")}${this.btn("output", "输出为PDF")}${this.btn("print", "打印")}${this.btn("preview", "打印预览")}
          ${this.btn("undo", "撤销")}${this.btn("redo", "恢复", "faded")}${this.btn("down", "更多")}
        </div>
        <span class="rule"></span>
        <nav class="nav">${["开始", "插入", "页面", "公式", "数据", "审阅", "视图", "工具", "会员专享", "效率", "智能工具箱"].map(
          (t, i) => html`<button class=${classMap({ cur: i === 0 })}>${t}</button>`)}</nav>
        <span class="rule"></span>
        ${this.btn("search", "搜索", "find")}
        <div class="right"><button class="dirty">${icon("cloud")}有修改</button><button class="share">${icon("share")}分享</button></div>
      </div>
      <wps-ribbon></wps-ribbon>
      <div class="main">
        <section class="book">
          <div class="formula">
            <div class="cellname"><input aria-label="名称框" .value=${"C25"} /><button aria-label="名称列表">${icon("down")}</button></div>
            <div class="entry">${this.btn("zoomFx", "缩放")}<button class="fx">fx</button><span class="rule"></span>
              <input aria-label="编辑栏" .value=${"4277"} /></div>
          </div>
          <div class="gridrow">
            <wps-grid></wps-grid>
            <div class="vbar"><span class="vtop"></span><span class="split"></span>${this.tri("M0 5h6L3 1z")}
              <span class="track"><span class="thumb"></span></span>${this.tri("M0 1h6L3 5z", "low")}</div>
          </div>
          <div class="sheets">
            <div class="steps">${this.btn("first", "首个")}${this.btn("prev", "上一个")}${this.btn("next", "下一个")}${this.btn("last", "末个")}</div>
            <button class="sheet">Sheet2</button><button class="sheet cur">Sheet1</button>${this.btn("plusBold", "新建工作表")}
            <div class="hbar"><span class="tick"></span>${this.tri("M5 0v6L1 3z")}<span class="ht"><span></span></span>${this.tri("M1 0v6l4-3z")}<span class="tick"></span></div>
          </div>
        </section>
        <aside class="props"><h2>属性${chevron}</h2><span class="acts">${this.btn("pin", "固定")}${this.btn("close", "关闭面板")}</span></aside>
        <aside class="strip">
          ${this.btn("dash", "收起")}${this.btn("pointer", "选择")}${this.btn("sliders", "属性设置")}${this.btn("resize", "尺寸")}${this.btn("artist", "美化")}
          ${this.btn("tools", "工具箱")}${this.btn("book", "知识库")}${this.btn("help", "帮助")}${this.btn("more", "更多工具")}
        </aside>
      </div>
      <footer class="status">
        ${this.btn("macro", "宏")}
        <div class="right">
          ${this.btn("eye", "护眼模式", "eye")}
          <button class="cross" aria-label="阅读模式">${icon("cross")}${chevron}</button><span class="rule"></span>
          <span class="views">${this.btn("viewNormal", "普通视图", "cur")}${this.btn("viewBook", "分页预览")}${this.btn("viewPage", "页面布局")}</span>
          <span class="rule"></span>
          <button class="zoomv">145%${chevron}</button>
          ${this.btn("minusBold", "缩小")}<input class="slider" type="range" min="0" max="100" .value=${"58"} aria-label="显示比例" />${this.btn("plusBold", "放大")}
          ${this.btn("full", "全屏", "fullbtn")}
        </div>
      </footer>
      <wps-format-dialog class="dialog" role="dialog" aria-label="单元格格式"></wps-format-dialog>
      <svg class="pointers" viewBox="790 220 160 236" width="160" height="236" aria-hidden="true">
        <g fill="#f00" stroke="#8a0000" stroke-width=".5" stroke-linejoin="round">
          <path d="M803 283l12-22 5 3.500 37-34 2.200 2.200L822.500 266l3.500 4z"/><path d="M843 377l25 9.500-2.500 3.700L942.500 446l-1.600 2.400L863.500 393l-2.500 3z"/></g></svg>
      <div class="edge"></div>
      <div class="mark">
        <svg viewBox="0 0 44 40" width="44" height="40" aria-hidden="true">
          <defs><linearGradient id="b" x1="0" y1="1" x2="1" y2="0"><stop offset="0" stop-color="#3f62b8"/><stop offset="1" stop-color="#45bdf0"/></linearGradient>
          <linearGradient id="g" x1="0" y1="1" x2="1" y2="0"><stop offset="0" stop-color="#e3dd55"/><stop offset="1" stop-color="#3fae62"/></linearGradient></defs>
          <path d="M44 1C27-1 6 7 1 20c-2 6 2 10 8 11-5-5-3-11 3-17C19 7 30 3 44 1z" fill="url(#b)"/>
          <path d="M21 17c6-4 20-5 21 2 0 10-16 20-36 20 14-2 25-9 25-15 0-5-5-7-10-7z" fill="url(#g)"/>
          <path d="M30 13c-8-1-20 4-20 11 0 6 10 5 14-1-4 1-8 0-7-3 1-4 7-6 13-7z" fill="url(#b)"/></svg>
        <span><b>极光下载站</b><small>www.xz7.com</small></span>
      </div>`;
  }
}
